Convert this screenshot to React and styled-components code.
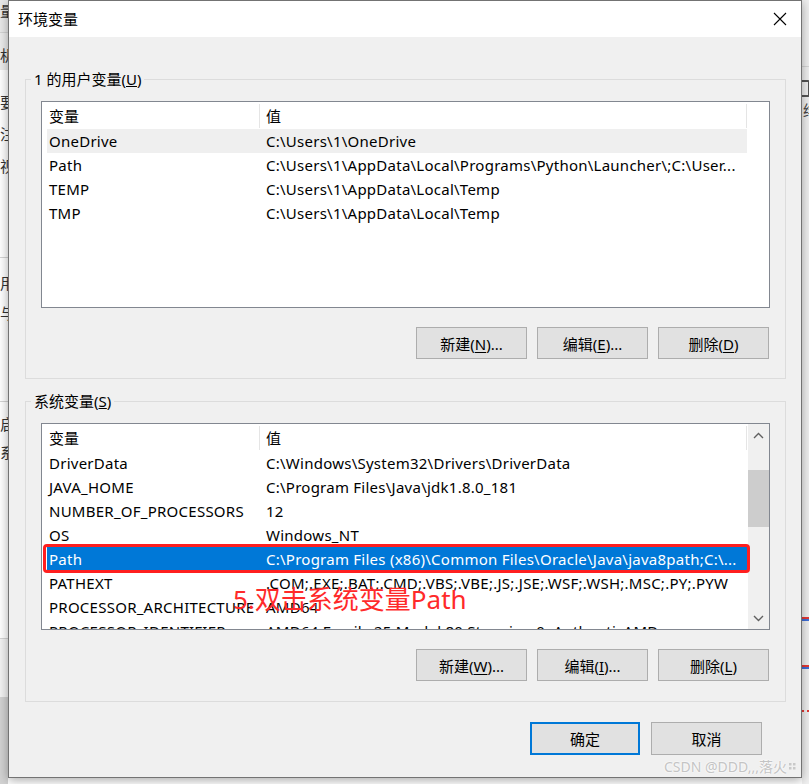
import React from 'react';
import styled, { createGlobalStyle, css } from 'styled-components';

const GlobalStyle = createGlobalStyle`
  html, body {
    margin: 0;
    padding: 0;
    background: #ffffff;
  }
  body {
    font-family: 'Noto Sans', 'Noto Sans CJK SC', sans-serif;
    font-size: 15px;
    color: #000;
  }
  * {
    box-sizing: border-box;
  }
`;

const userVars = [
  { name: 'OneDrive', value: 'C:\\Users\\1\\OneDrive', state: 'hover' },
  {
    name: 'Path',
    value: 'C:\\Users\\1\\AppData\\Local\\Programs\\Python\\Launcher\\;C:\\User...',
  },
  { name: 'TEMP', value: 'C:\\Users\\1\\AppData\\Local\\Temp' },
  { name: 'TMP', value: 'C:\\Users\\1\\AppData\\Local\\Temp' },
];

const systemVars = [
  { name: 'DriverData', value: 'C:\\Windows\\System32\\Drivers\\DriverData' },
  { name: 'JAVA_HOME', value: 'C:\\Program Files\\Java\\jdk1.8.0_181' },
  { name: 'NUMBER_OF_PROCESSORS', value: '12' },
  { name: 'OS', value: 'Windows_NT' },
  {
    name: 'Path',
    value: 'C:\\Program Files (x86)\\Common Files\\Oracle\\Java\\java8path;C:\\...',
    state: 'selected',
  },
  {
    name: 'PATHEXT',
    value: '.COM;.EXE;.BAT;.CMD;.VBS;.VBE;.JS;.JSE;.WSF;.WSH;.MSC;.PY;.PYW',
  },
  { name: 'PROCESSOR_ARCHITECTURE', value: 'AMD64' },
  {
    name: 'PROCESSOR_IDENTIFIER',
    value: 'AMD64 Family 25 Model 80 Stepping 0, AuthenticAMD',
  },
];

const leftStrip = [
  { h: 33, bg: '#e9e9e9', line: true, ch: '量', pad: 0 },
  { h: 37, bg: '#ececec', line: false, ch: '机', pad: 11 },
  { h: 188, bg: '#ffffff', line: true, ch: '要注视', pad: 16, lh: 32 },
  { h: 144, bg: '#ffffff', line: true, ch: '用与', pad: 10, lh: 30 },
  { h: 237, bg: '#ffffff', line: true, ch: '启系', pad: 8, lh: 28 },
  { h: 58, bg: '#f3f3f3', line: false, ch: '', pad: 0 },
  { h: 87, bg: '#d2d2d2', line: false, ch: '', pad: 0 },
];

const Chevron = ({ up }) => (
  <svg width='11' height='7' viewBox='0 0 11 7'>
    <polyline
      points={up ? '1,6 5.5,1.5 10,6' : '1,1 5.5,5.5 10,1'}
      fill='none'
      stroke='#606060'
      strokeWidth='1.4'
    />
  </svg>
);

const VarList = ({ rows, scroll, children }) => (
  <ListBox>
    <ListContent>
      <HeaderRow>
        <HeadCell $first>变量</HeadCell>
        <HeadCell>值</HeadCell>
      </HeaderRow>
      {rows.map((r) => (
        <Row key={r.name + r.value} $state={r.state}>
          <NameCell>{r.name}</NameCell>
          <ValueCell>{r.value}</ValueCell>
        </Row>
      ))}
    </ListContent>
    {scroll && (
      <ScrollBar>
        <ScrollArrow>
          <Chevron up />
        </ScrollArrow>
        <ScrollTrack>
          <Thumb />
        </ScrollTrack>
        <ScrollArrow>
          <Chevron />
        </ScrollArrow>
      </ScrollBar>
    )}
    {children}
  </ListBox>
);

const Key = ({ k }) => (
  <>
    (<u>{k}</u>)
  </>
);

const App = () => {
  return (
    <>
      <GlobalStyle />
      <Screen>
        <LeftBackdrop>
          {leftStrip.map((s, i) => (
            <StripBlock
              key={i}
              $h={s.h}
              $bg={s.bg}
              $line={s.line}
              $pad={s.pad}
              $lh={s.lh}
            >
              {s.ch.split('').map((c, j) => (
                <div key={j}>{c}</div>
              ))}
            </StripBlock>
          ))}
        </LeftBackdrop>

        <Dialog>
          <TitleBar>
            <Title>环境变量</Title>
            <svg width='14' height='14' viewBox='0 0 14 14'>
              <path d='M1 1 L13 13 M13 1 L1 13' stroke='#000' strokeWidth='1.1' />
            </svg>
          </TitleBar>

          <Body>
            <Group $top={32}>
              <Legend>
                1 的用户变量<Key k='U' />
              </Legend>
              <Inner>
                <VarList rows={userVars} />
                <ButtonRow>
                  <Button>
                    新建<Key k='N' />...
                  </Button>
                  <Button>
                    编辑<Key k='E' />...
                  </Button>
                  <Button>
                    删除<Key k='D' />
                  </Button>
                </ButtonRow>
              </Inner>
            </Group>

            <Group $top={12} $bottom={20}>
              <Legend>
                系统变量<Key k='S' />
              </Legend>
              <Inner $top={12}>
                <VarList rows={systemVars} scroll>
                  <RedFrame />
                  <Annotation>5.双击系统变量Path</Annotation>
                </VarList>
                <ButtonRow>
                  <Button>
                    新建<Key k='W' />...
                  </Button>
                  <Button>
                    编辑<Key k='I' />...
                  </Button>
                  <Button>
                    删除<Key k='L' />
                  </Button>
                </ButtonRow>
              </Inner>
            </Group>

            <Footer>
              <Button $primary>确定</Button>
              <Button $wide>取消</Button>
            </Footer>
          </Body>
        </Dialog>

        <RightBackdrop>
          <RightLine $top={66} />
          <RightBox />
          <RightChar>绯</RightChar>
          <RightStripe $top={494} />
          <RightStripe $top={44} />
          <RightDots />
        </RightBackdrop>

        <Watermark>
          CSDN @DDD,,,落火
          <svg width='8' height='10' viewBox='0 0 8 10'>
            <rect x='0' y='1' width='2.5' height='2.5' fill='#c9c9c9' />
            <rect x='4' y='1' width='2.5' height='2.5' fill='#c9c9c9' />
            <rect x='0' y='5' width='2.5' height='2.5' fill='#c9c9c9' />
            <rect x='4' y='5' width='2.5' height='2.5' fill='#c9c9c9' />
          </svg>
        </Watermark>
      </Screen>
    </>
  );
};

const Screen = styled.div`
  position: relative;
  display: flex;
  width: 809px;
  height: 784px;
  overflow: hidden;
  background: #ffffff;
`;

const LeftBackdrop = styled.div`
  width: 8px;
  flex-shrink: 0;
  display: flex;
  flex-direction: column;
  overflow: hidden;
`;

const StripBlock = styled.div`
  height: ${(p) => p.$h}px;
  flex-shrink: 0;
  background: ${(p) => p.$bg};
  border-bottom: ${(p) => (p.$line ? '1px solid #d4d4d4' : 'none')};
  padding-top: ${(p) => p.$pad}px;
  font-family: 'Noto Sans CJK SC', sans-serif;
  font-size: 15px;
  line-height: ${(p) => p.$lh || 22}px;
  color: #333;
  white-space: nowrap;
`;

const Dialog = styled.div`
  width: 794px;
  height: 778px;
  flex-shrink: 0;
  display: flex;
  flex-direction: column;
  border: 1px solid #737373;
  background: #f0f0f0;
  box-shadow: 0 2px 10px rgba(0, 0, 0, 0.35);
  z-index: 1;
`;

const TitleBar = styled.div`
  height: 36px;
  display: flex;
  align-items: center;
  justify-content: space-between;
  padding: 0 14px 0 9px;
  background: #ffffff;
`;

const Title = styled.div`
  font-size: 15px;
  line-height: 20px;
`;

const Body = styled.div`
  display: flex;
  flex-direction: column;
  padding: 0 15px 0 16px;
`;

const Group = styled.fieldset`
  margin: ${(p) => p.$top}px 0 0 0;
  padding: 0 0 ${(p) => p.$bottom || 19}px 0;
  border: 1px solid #dcdcdc;
  min-width: 0;
`;

const Legend = styled.legend`
  margin-left: 5px;
  padding: 0 3px;
  font-size: 15px;
  line-height: 20px;
  white-space: nowrap;
`;

const Inner = styled.div`
  padding: ${(p) => p.$top || 12}px 15px 0 15px;
`;

const ListBox = styled.div`
  position: relative;
  height: 207px;
  display: flex;
  border: 1px solid #828790;
  background: #ffffff;
  overflow: hidden;
`;

const ListContent = styled.div`
  width: 705px;
  padding-left: 5px;
  flex-shrink: 0;
`;

const HeaderRow = styled.div`
  height: 27px;
  display: flex;
  align-items: center;
  padding-top: 1px;
`;

const HeadCell = styled.div`
  height: 24px;
  line-height: 24px;
  border-right: 1px solid #e5e5e5;
  ${(p) =>
    p.$first
      ? css`
          width: 213px;
          padding-left: 2px;
        `
      : css`
          flex: 1;
          padding-left: 6px;
        `}
`;

const Row = styled.div`
  height: 24px;
  display: flex;
  align-items: center;
  line-height: 24px;
  white-space: nowrap;
  letter-spacing: 0.25px;
  ${(p) =>
    p.$state === 'hover' &&
    css`
      background: #efefef;
    `}
  ${(p) =>
    p.$state === 'selected' &&
    css`
      background: #0078d7;
      color: #ffffff;
    `}
`;

const NameCell = styled.div`
  width: 213px;
  flex-shrink: 0;
  padding-left: 2px;
  overflow: visible;
`;

const ValueCell = styled.div`
  flex: 1;
  padding-left: 6px;
  overflow: hidden;
`;

const ScrollBar = styled.div`
  width: 21px;
  margin-left: auto;
  display: flex;
  flex-direction: column;
  background: #f0f0f0;
`;

const ScrollArrow = styled.div`
  height: 22px;
  display: flex;
  align-items: center;
  justify-content: center;
`;

const ScrollTrack = styled.div`
  flex: 1;
  padding-top: 24px;
`;

const Thumb = styled.div`
  height: 57px;
  background: #cdcdcd;
`;

const RedFrame = styled.div`
  position: absolute;
  left: 1px;
  top: 120px;
  width: 707px;
  height: 29px;
  border: 3px solid #ff1f1f;
  border-radius: 4px;
`;

const Annotation = styled.div`
  position: absolute;
  left: 191px;
  top: 162px;
  font-family: 'Noto Sans', 'Noto Sans CJK SC', sans-serif;
  font-size: 26px;
  line-height: 26px;
  color: #ff2a2a;
  white-space: nowrap;
`;

const ButtonRow = styled.div`
  display: flex;
  justify-content: flex-end;
  gap: 10px;
  margin-top: 19px;
  padding-right: 1px;
`;

const Button = styled.button`
  width: ${(p) => (p.$primary ? 110 : 111)}px;
  height: ${(p) => (p.$primary || p.$wide ? 33 : 32)}px;
  padding: 0;
  font-family: 'Noto Sans', 'Noto Sans CJK SC', sans-serif;
  font-size: 15px;
  color: #000;
  background: #e1e1e1;
  border: ${(p) => (p.$primary ? '2px solid #0078d7' : '1px solid #adadad')};
  border-radius: 0;
  & u {
    text-underline-offset: 2px;
  }
`;

const Footer = styled.div`
  display: flex;
  justify-content: flex-end;
  gap: 11px;
  margin-top: 20px;
  padding-right: 24px;
`;

const RightBackdrop = styled.div`
  position: relative;
  flex: 1;
  background: #f0f0f0;
  display: flex;
  flex-direction: column;
  overflow: hidden;
`;

const RightLine = styled.div`
  margin-top: ${(p) => p.$top}px;
  height: 1px;
  background: #d6d6d6;
`;

const RightBox = styled.div`
  margin-top: 13px;
  margin-left: -6px;
  width: 14px;
  height: 17px;
  border: 2px solid #555;
  border-radius: 2px;
`;

const RightChar = styled.div`
  margin-left: 1px;
  font-family: 'Noto Sans CJK SC', sans-serif;
  font-size: 15px;
  line-height: 26px;
  color: #444;
`;

const RightStripe = styled.div`
  margin-top: ${(p) => p.$top}px;
  height: 4px;
  border-top: 2px solid #e53935;
  border-bottom: 2px solid #3f6fd8;
`;

const RightDots = styled.div`
  margin-top: 41px;
  height: 2px;
  border-top: 2px dotted #e53935;
`;

const Watermark = styled.div`
  position: absolute;
  left: 664px;
  top: 759px;
  z-index: 2;
  display: flex;
  align-items: center;
  gap: 2px;
  font-family: 'Noto Sans', 'Noto Sans CJK SC', sans-serif;
  font-size: 14px;
  line-height: 16px;
  color: #c4c4c4;
  text-shadow: 0 0 2px #ffffff, 0 0 2px #ffffff;
  white-space: nowrap;
`;

export default App;
